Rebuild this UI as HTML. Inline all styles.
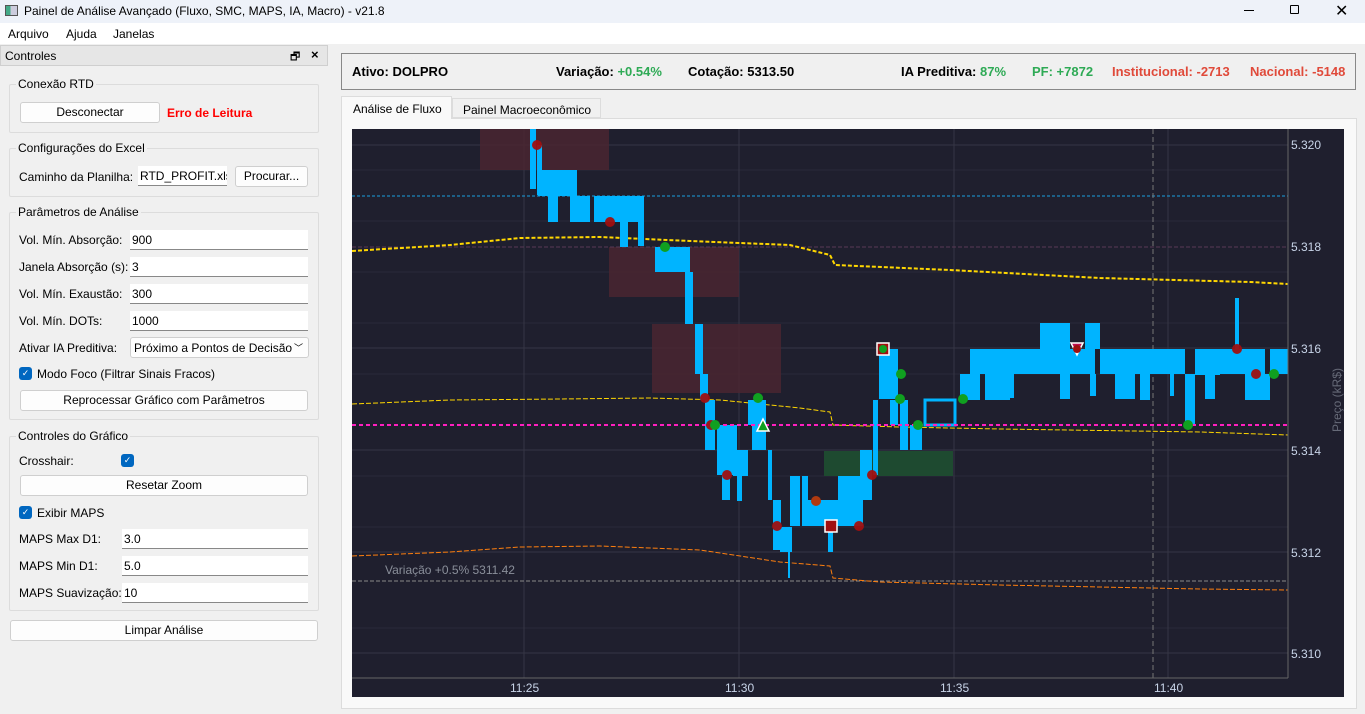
<!DOCTYPE html>
<html><head><meta charset="utf-8"><style>
*{box-sizing:border-box;margin:0;padding:0}
body{width:1365px;height:714px;background:#f0f0f0;font-family:"Liberation Sans",sans-serif;font-size:12px;color:#000;position:relative;overflow:hidden}
.a{position:absolute;white-space:nowrap}
.title{left:0;top:0;width:1365px;height:23px;background:#eef2f9}
.menu{left:0;top:23px;width:1365px;height:21px;background:#fff}
.grp{position:absolute;border:1px solid #dcdcdc;border-radius:2px}
.gl{position:absolute;background:#f0f0f0;padding:0 2px;font-size:12px}
.btn{position:absolute;background:#fdfdfd;border:1px solid #cfcfcf;border-radius:3px;text-align:center;font-size:12px;line-height:19px}
.inp{position:absolute;background:#fff;border-bottom:1px solid #888;font-size:12px;line-height:20px;padding-left:2px;height:20px;overflow:hidden}
.cb{position:absolute;width:13px;height:13px;background:#0067c0;border-radius:3px;color:#fff;font-size:9px;line-height:13px;text-align:center}
.hd{font-size:13px;font-weight:bold;top:64px}
</style></head><body>
<div class="a title"></div>
<div class="a" style="left:5px;top:5px;width:13px;height:11px;border:1px solid #555;background:linear-gradient(90deg,#4a8 0 40%,#ccd 40%)"></div>
<div class="a" style="left:24px;top:4px;font-size:12px">Painel de Análise Avançado (Fluxo, SMC, MAPS, IA, Macro) - v21.8</div>
<div class="a" style="left:1244px;top:10px;width:10px;height:1px;background:#000"></div>
<div class="a" style="left:1290px;top:5px;width:9px;height:9px;border:1px solid #000;border-radius:1px"></div>
<div class="a" style="left:1335px;top:1px;font-size:16px">✕</div>
<div class="a menu"></div>
<div class="a" style="left:8px;top:27px">Arquivo</div>
<div class="a" style="left:66px;top:27px">Ajuda</div>
<div class="a" style="left:113px;top:27px">Janelas</div>

<div class="a" style="left:0;top:45px;width:328px;height:21px;background:#e6e6e6;border:1px solid #cfcfcf"></div>
<div class="a" style="left:5px;top:49px">Controles</div>
<div class="a" style="left:290px;top:48px;font-size:11px">🗗</div>
<div class="a" style="left:311px;top:47px;font-size:13px;font-weight:bold">×</div>

<div class="grp" style="left:9px;top:84px;width:310px;height:49px"></div><div class="gl" style="left:16px;top:77px">Conexão RTD</div>
<div class="btn" style="left:20px;top:102px;width:140px;height:21px">Desconectar</div>
<div class="a" style="left:167px;top:106px;color:#f00;font-weight:bold">Erro de Leitura</div>

<div class="grp" style="left:9px;top:148px;width:310px;height:49px"></div><div class="gl" style="left:16px;top:141px">Configurações do Excel</div>
<div class="a" style="left:19px;top:170px">Caminho da Planilha:</div>
<div class="inp" style="left:138px;top:166px;width:89px">RTD_PROFIT.xlsx</div>
<div class="btn" style="left:235px;top:166px;width:73px;height:21px">Procurar...</div>

<div class="grp" style="left:9px;top:212px;width:310px;height:208px"></div><div class="gl" style="left:16px;top:205px">Parâmetros de Análise</div>
<div class="a" style="left:19px;top:233px">Vol. Mín. Absorção:</div><div class="inp" style="left:130px;top:230px;width:178px">900</div>
<div class="a" style="left:19px;top:260px">Janela Absorção (s):</div><div class="inp" style="left:130px;top:257px;width:178px">3</div>
<div class="a" style="left:19px;top:287px">Vol. Mín. Exaustão:</div><div class="inp" style="left:130px;top:284px;width:178px">300</div>
<div class="a" style="left:19px;top:314px">Vol. Mín. DOTs:</div><div class="inp" style="left:130px;top:311px;width:178px">1000</div>
<div class="a" style="left:19px;top:341px">Ativar IA Preditiva:</div>
<div class="a" style="left:130px;top:337px;width:179px;height:21px;background:#fdfdfd;border:1px solid #cfcfcf;border-radius:3px;padding:3px 0 0 3px">Próximo a Pontos de Decisão <span style="position:absolute;right:5px;top:3px;font-size:9px">﹀</span></div>
<div class="cb" style="left:19px;top:367px">✓</div><div class="a" style="left:37px;top:367px">Modo Foco (Filtrar Sinais Fracos)</div>
<div class="btn" style="left:20px;top:390px;width:288px;height:21px">Reprocessar Gráfico com Parâmetros</div>

<div class="grp" style="left:9px;top:436px;width:310px;height:175px"></div><div class="gl" style="left:16px;top:429px">Controles do Gráfico</div>
<div class="a" style="left:19px;top:454px">Crosshair:</div><div class="cb" style="left:121px;top:454px">✓</div>
<div class="btn" style="left:20px;top:475px;width:288px;height:21px">Resetar Zoom</div>
<div class="cb" style="left:19px;top:506px">✓</div><div class="a" style="left:37px;top:506px">Exibir MAPS</div>
<div class="a" style="left:19px;top:532px">MAPS Max D1:</div><div class="inp" style="left:122px;top:529px;width:186px">3.0</div>
<div class="a" style="left:19px;top:559px">MAPS Min D1:</div><div class="inp" style="left:122px;top:556px;width:186px">5.0</div>
<div class="a" style="left:19px;top:586px">MAPS Suavização:</div><div class="inp" style="left:122px;top:583px;width:186px">10</div>
<div class="btn" style="left:10px;top:620px;width:308px;height:21px">Limpar Análise</div>

<div class="a" style="left:341px;top:53px;width:1015px;height:37px;border:1px solid #888;background:#f0f0f0"></div>
<div class="a hd" style="left:352px">Ativo: DOLPRO</div>
<div class="a hd" style="left:556px">Variação: <span style="color:#2eaa55">+0.54%</span></div>
<div class="a hd" style="left:688px">Cotação: 5313.50</div>
<div class="a hd" style="left:901px">IA Preditiva: <span style="color:#2eaa55">87%</span></div>
<div class="a hd" style="left:1032px;color:#2eaa55">PF: +7872</div>
<div class="a hd" style="left:1112px;color:#e04a3a">Institucional: -2713</div>
<div class="a hd" style="left:1250px;color:#e04a3a">Nacional: -5148</div>

<div class="a" style="left:341px;top:118px;width:1016px;height:591px;background:#f9f9f9;border:1px solid #dcdcdc"></div>
<div class="a" style="left:341px;top:96px;width:111px;height:23px;background:#f9f9f9;border:1px solid #dcdcdc;border-bottom:none;padding:5px 0 0 11px">Análise de Fluxo</div>
<div class="a" style="left:452px;top:98px;width:149px;height:20px;background:#f0f0f0;border:1px solid #dcdcdc;padding:4px 0 0 10px">Painel Macroeconômico</div>

<svg class="a" style="left:352px;top:129px" width="992" height="568" viewBox="352 129 992 568">
<rect x="352" y="129" width="992" height="568" fill="#1f1f2e"/>
<g stroke="#2a2a3a" stroke-width="1">
<line x1="352" x2="1288" y1="170" y2="170"/><line x1="352" x2="1288" y1="221" y2="221"/><line x1="352" x2="1288" y1="272" y2="272"/><line x1="352" x2="1288" y1="323" y2="323"/><line x1="352" x2="1288" y1="374" y2="374"/><line x1="352" x2="1288" y1="476" y2="476"/><line x1="352" x2="1288" y1="527" y2="527"/><line x1="352" x2="1288" y1="628" y2="628"/>
</g>
<g stroke="#363645" stroke-width="1">
<line x1="352" x2="1288" y1="145" y2="145"/><line x1="352" x2="1288" y1="348" y2="348"/><line x1="352" x2="1288" y1="450" y2="450"/><line x1="352" x2="1288" y1="552" y2="552"/><line x1="352" x2="1288" y1="653" y2="653"/>
<line x1="524" x2="524" y1="129" y2="678"/><line x1="739" x2="739" y1="129" y2="678"/><line x1="954" x2="954" y1="129" y2="678"/><line x1="1168" x2="1168" y1="129" y2="678"/>
</g>
<rect x="480" y="129" width="129" height="41" fill="#4a2630" opacity=".85"/>
<rect x="609" y="247" width="130" height="50" fill="#4a2630" opacity=".85"/>
<rect x="652" y="324" width="129" height="69" fill="#4a2630" opacity=".85"/>
<rect x="824" y="451" width="129" height="25" fill="#1e4a30"/>
<line x1="352" x2="1288" y1="196" y2="196" stroke="#1a9fe0" stroke-dasharray="3,2"/>
<line x1="352" x2="1288" y1="247" y2="247" stroke="#5a3a55" stroke-dasharray="4,2"/>
<line x1="1153" x2="1153" y1="129" y2="678" stroke="#777" stroke-dasharray="5,3"/>
<line x1="352" x2="1288" y1="581" y2="581" stroke="#888" stroke-dasharray="4,2"/>
<polyline fill="none" stroke="#ffd700" stroke-width="2" stroke-dasharray="4,2" points="352,251 450,245 520,238 600,237 690,241 790,245 830,255 835,265 950,270 1100,278 1250,282 1288,284"/>
<polyline fill="none" stroke="#ffd700" stroke-width="1" stroke-dasharray="5,2" points="352,404 450,400 560,399 650,398 720,400 800,408 830,412 833,425 900,427 1000,429 1200,432 1288,435"/>
<polyline fill="none" stroke="#ff7f0e" stroke-width="1" stroke-dasharray="5,2" points="352,556 450,552 520,547 600,546 700,550 780,562 830,566 833,578 880,582 1000,585 1200,589 1288,590"/>
<g fill="#00b4ff">
<rect x="530" y="129" width="6" height="60"/><rect x="537" y="145" width="5" height="50"/><rect x="538" y="170" width="30" height="26"/><rect x="548" y="196" width="10" height="26"/><rect x="565" y="170" width="12" height="26"/><rect x="570" y="196" width="20" height="26"/><rect x="594" y="196" width="45" height="26"/><rect x="620" y="222" width="8" height="25"/><rect x="638" y="196" width="6" height="50"/><rect x="655" y="247" width="35" height="25"/><rect x="685" y="272" width="8" height="52"/><rect x="695" y="324" width="8" height="50"/><rect x="700" y="374" width="8" height="26"/><rect x="705" y="400" width="10" height="50"/><rect x="717" y="425" width="20" height="50"/><rect x="722" y="450" width="8" height="50"/><rect x="733" y="450" width="15" height="26"/><rect x="737" y="476" width="5" height="25"/><rect x="748" y="400" width="18" height="25"/><rect x="752" y="425" width="14" height="25"/><rect x="768" y="450" width="4" height="50"/><rect x="773" y="500" width="8" height="50"/><rect x="780" y="527" width="12" height="25"/><rect x="790" y="476" width="10" height="50"/><rect x="802" y="476" width="6" height="50"/><rect x="808" y="500" width="30" height="26"/><rect x="838" y="476" width="25" height="50"/><rect x="828" y="527" width="5" height="25"/><rect x="860" y="450" width="12" height="50"/><rect x="873" y="400" width="5" height="75"/><rect x="879" y="349" width="19" height="50"/><rect x="890" y="400" width="8" height="25"/><rect x="900" y="400" width="8" height="50"/><rect x="910" y="425" width="12" height="25"/><rect x="925" y="400" width="30" height="25" fill="none" stroke="#00b4ff" stroke-width="3"/><rect x="960" y="374" width="20" height="26"/><rect x="970" y="349" width="45" height="25"/><rect x="985" y="374" width="25" height="26"/><rect x="1015" y="349" width="40" height="25"/><rect x="1040" y="323" width="30" height="26"/><rect x="1055" y="349" width="40" height="25"/><rect x="1060" y="374" width="10" height="25"/><rect x="1085" y="323" width="15" height="26"/><rect x="1100" y="349" width="50" height="25"/><rect x="1115" y="374" width="20" height="25"/><rect x="1140" y="374" width="10" height="26"/><rect x="1150" y="349" width="35" height="25"/><rect x="1185" y="374" width="10" height="50"/><rect x="1195" y="349" width="25" height="26"/><rect x="1205" y="374" width="10" height="25"/><rect x="1220" y="349" width="45" height="25"/><rect x="1235" y="298" width="4" height="51"/><rect x="1245" y="374" width="25" height="26"/><rect x="1270" y="349" width="18" height="25"/>
<rect x="788" y="550" width="2" height="28"/><rect x="1010" y="374" width="4" height="24"/><rect x="1090" y="374" width="6" height="22"/><rect x="1170" y="374" width="4" height="22"/>
</g>
<line x1="352" x2="1288" y1="425" y2="425" stroke="#ff1fbf" stroke-width="2" stroke-dasharray="4,3"/>
<g fill="#a01010" opacity=".95">
<circle cx="537" cy="145" r="5"/><circle cx="610" cy="222" r="5"/><circle cx="705" cy="398" r="5"/><circle cx="711" cy="425" r="5"/><circle cx="727" cy="475" r="5"/><circle cx="777" cy="526" r="5"/><circle cx="859" cy="526" r="5"/><circle cx="872" cy="475" r="5"/><circle cx="1237" cy="349" r="5"/><circle cx="1256" cy="374" r="5"/>
</g>
<circle cx="816" cy="501" r="5" fill="#b03a10"/>
<g fill="#10a020">
<circle cx="665" cy="247" r="5"/><circle cx="758" cy="398" r="5"/><circle cx="715" cy="425" r="5"/><circle cx="901" cy="374" r="5"/><circle cx="900" cy="399" r="5"/><circle cx="918" cy="425" r="5"/><circle cx="963" cy="399" r="5"/><circle cx="1188" cy="425" r="5"/><circle cx="1274" cy="374" r="5"/>
</g>
<rect x="877" y="343" width="12" height="12" fill="#a01010" stroke="#fff" stroke-width="1.5"/><circle cx="883" cy="349" r="4" fill="#10a020"/>
<rect x="825" y="520" width="12" height="12" fill="#a01010" stroke="#fff" stroke-width="1.5"/>
<polygon points="763,419 757,431 769,431" fill="#10a020" stroke="#fff" stroke-width="1.5"/>
<polygon points="1071,343 1083,343 1077,355" fill="#c01050" stroke="#fff" stroke-width="1.5"/><circle cx="1077" cy="349" r="4" fill="#a01010"/>
<line x1="1288" x2="1288" y1="129" y2="678" stroke="#666"/>
<line x1="352" x2="1288" y1="678" y2="678" stroke="#666"/>
<text x="385" y="574" fill="#8a8f9a" font-size="12" font-family="Liberation Sans">Variação +0.5% 5311.42</text>
<g fill="#c8d4e8" font-size="12" font-family="Liberation Sans">
<text x="1291" y="149">5.320</text><text x="1291" y="251">5.318</text><text x="1291" y="353">5.316</text><text x="1291" y="455">5.314</text><text x="1291" y="557">5.312</text><text x="1291" y="658">5.310</text>
<text x="510" y="692">11:25</text><text x="725" y="692">11:30</text><text x="940" y="692">11:35</text><text x="1154" y="692">11:40</text>
</g>
<text transform="translate(1341,432) rotate(-90)" fill="#666a78" font-size="12" font-family="Liberation Sans">Preço (kR$)</text>
</svg>
</body></html>
